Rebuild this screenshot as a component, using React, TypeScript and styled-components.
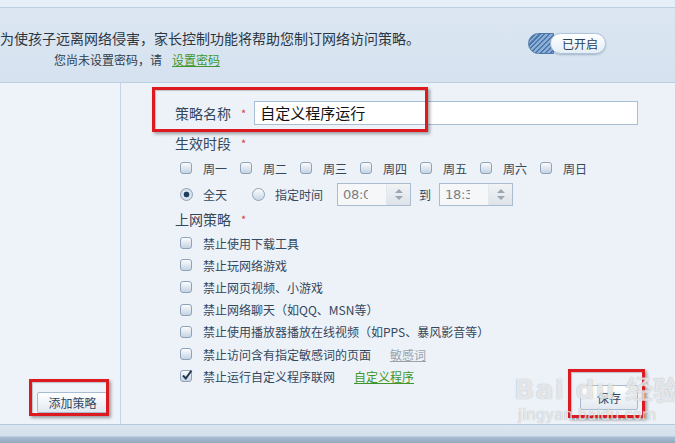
import React from "react";
import styled, { createGlobalStyle } from "styled-components";

const GlobalStyle = createGlobalStyle`
  html, body { margin: 0; padding: 0; background: #edf2f8; }
  body { font-family: "Noto Sans CJK SC", "Noto Sans", sans-serif; overflow: hidden; }
  * { box-sizing: border-box; }
`;

const Page = styled.div`
  position: relative;
  width: 675px;
  height: 443px;
  display: flex;
  flex-direction: column;
  background: #edf2f8;
  overflow: hidden;
`;

const TopStrip = styled.div`
  height: 8px;
  background: #e6eef7;
  border-bottom: 1px solid #bccee2;
`;

const Header = styled.div`
  height: 75px;
  display: flex;
  justify-content: space-between;
  align-items: flex-start;
  background: linear-gradient(#dbe6f2, #d6e2ef);
  border-bottom: 1px solid #bdcfe2;
`;

const Intro = styled.div`
  padding-top: 21px;
  display: flex;
  flex-direction: column;
`;

const IntroLine = styled.div`
  font-size: 14px;
  line-height: 18px;
  color: #2b3642;
  white-space: nowrap;
`;

const PasswordLine = styled.div`
  margin-top: 5px;
  padding-left: 54px;
  font-size: 12px;
  line-height: 16px;
  color: #333d48;
  display: flex;
  gap: 10px;
  white-space: nowrap;
`;

const Link = styled.span<{ $tone: "green" | "grey" }>`
  color: ${(p) => (p.$tone === "green" ? "#3e962c" : "#9aa3ad")};
  text-decoration: underline;
  font-size: 12px;
  cursor: pointer;
`;

const Toggle = styled.div`
  margin-top: 25px;
  margin-right: 69px;
  display: flex;
  align-items: center;
`;

const ToggleKnob = styled.div`
  width: 26px;
  height: 21px;
  border-radius: 11px 0 0 11px;
  border: 1px solid #4f78a8;
  background: repeating-linear-gradient(
    135deg,
    #4c7aaf 0px,
    #4c7aaf 1.5px,
    #8dafd6 1.5px,
    #8dafd6 3.5px
  );
`;

const TogglePill = styled.div`
  margin-left: -4px;
  width: 56px;
  height: 21px;
  border-radius: 11px;
  border: 1px solid #aec2d8;
  background: linear-gradient(#ffffff, #e5edf6);
  box-shadow: 0 1px 2px rgba(60, 90, 130, 0.35);
  font-size: 12px;
  line-height: 19px;
  color: #2c3e52;
  padding-left: 11px;
`;

const Main = styled.div`
  flex: 1;
  display: flex;
  min-height: 0;
`;

const Sidebar = styled.div`
  width: 121px;
  border-right: 1px solid #c6d5e5;
  display: flex;
  flex-direction: column;
  justify-content: flex-end;
  padding: 0 0 11px 37px;
  background: #edf3f9;
`;

const Button = styled.div<{ $w: number }>`
  width: ${(p) => p.$w}px;
  height: ${(p) => (p.$w > 60 ? 21 : 25)}px;
  border: 1px solid #a9bbce;
  border-radius: 2px;
  background: linear-gradient(#ffffff, #e2e9f1);
  display: flex;
  align-items: center;
  justify-content: center;
  font-size: 12px;
  color: #2f4763;
`;

const Content = styled.div`
  flex: 1;
  display: grid;
  padding-left: 54px;
  padding-right: 37px;
  padding-bottom: 14px;
`;

const Form = styled.div`
  grid-area: 1 / 1;
  display: flex;
  flex-direction: column;
  padding-top: 18px;
`;

const SaveSlot = styled.div`
  grid-area: 1 / 1;
  justify-self: end;
  align-self: end;
`;

const NameRow = styled.div`
  display: flex;
  align-items: center;
  height: 24px;
`;

const Label = styled.div<{ $gap: number }>`
  font-size: 14px;
  line-height: 18px;
  color: #33475d;
  margin-top: ${(p) => p.$gap}px;
  white-space: nowrap;
  display: flex;
  align-items: center;
`;

const Star = styled.span`
  color: #d83a3a;
  font-size: 11px;
  margin-left: 10px;
  margin-right: 8px;
`;

const NameInput = styled.div`
  flex: 1;
  height: 24px;
  background: #fff;
  border: 1px solid #a9bfd6;
  font-size: 15px;
  line-height: 22px;
  color: #111;
  padding-left: 5px;
`;

const Row = styled.div<{ $gap: number; $h: number }>`
  margin-top: ${(p) => p.$gap}px;
  height: ${(p) => p.$h}px;
  display: flex;
  align-items: center;
  padding-left: 5px;
  font-size: 12px;
  color: #33475d;
  white-space: nowrap;
`;

const DayGroup = styled.div`
  width: 60px;
  display: flex;
  align-items: center;
  gap: 11px;
`;

const Check = styled.div`
  position: relative;
  width: 12px;
  height: 12px;
  border: 1px solid #8ea3ba;
  border-radius: 3px;
  background: linear-gradient(#fbfcfe, #c5d3e3);
  flex-shrink: 0;
`;

const Radio = styled.div<{ $on?: boolean }>`
  width: 13px;
  height: 13px;
  border: 1px solid #8ea3ba;
  border-radius: 50%;
  background: ${(p) =>
    p.$on
      ? "radial-gradient(circle, #1f3d5e 0 2.6px, #dfe7f0 3.2px, #c8d5e4 100%)"
      : "linear-gradient(#fbfcfe, #cad6e4)"};
  flex-shrink: 0;
`;

const RadioLabel = styled.span<{ $gap: number }>`
  margin-left: 10px;
  margin-right: ${(p) => p.$gap}px;
`;

const Spinner = styled.div`
  width: 74px;
  height: 23px;
  border: 1px solid #a9bcd0;
  background: #f6f7f8;
  display: flex;
`;

const SpinText = styled.div`
  width: 30px;
  padding-left: 5px;
  overflow: hidden;
  font-size: 13px;
  line-height: 21px;
  color: #7a7f86;
  font-family: "DejaVu Sans", sans-serif;
  letter-spacing: -0.3px;
`;

const SpinArrows = styled.div`
  margin-left: auto;
  width: 24px;
  display: flex;
  flex-direction: column;
  align-items: center;
  justify-content: center;
  gap: 3px;
  background: linear-gradient(#f1f3f5, #dde3e9);
  border-left: 1px solid #e3e8ee;
`;

const Arrow = styled.div<{ $up?: boolean }>`
  width: 0;
  height: 0;
  border-left: 4px solid transparent;
  border-right: 4px solid transparent;
  ${(p) =>
    p.$up ? "border-bottom: 4px solid #9aa6b3;" : "border-top: 4px solid #9aa6b3;"}
`;

const To = styled.span`
  margin: 0 8px;
  font-size: 12px;
`;

const Rule = styled.div<{ $first?: boolean }>`
  margin-top: ${(p) => (p.$first ? 4 : 0)}px;
  height: 22.2px;
  display: flex;
  align-items: center;
  gap: 11px;
  padding-left: 5px;
  font-size: 12px;
  color: #33475d;
  white-space: nowrap;
`;

const RuleLink = styled.span`
  margin-left: 8px;
  display: inline-flex;
`;

const Footer = styled.div`
  height: 19px;
  border-top: 1px solid #b4c7db;
  background: linear-gradient(#dbe6f1 0, #d3dfec 11px, #a9bdd1 12px, #8ea5bc 19px);
`;

const Mark = styled.div<{ $l: number; $t: number; $w: number; $h: number }>`
  position: absolute;
  left: ${(p) => p.$l}px;
  top: ${(p) => p.$t}px;
  width: ${(p) => p.$w}px;
  height: ${(p) => p.$h}px;
  border: 3px solid #dc1a1f;
  box-shadow: 2px 2px 3px rgba(0, 0, 0, 0.35), inset 1px 1px 1px rgba(0, 0, 0, 0.2);
  pointer-events: none;
`;

const Watermark = styled.div`
  position: absolute;
  left: 514px;
  top: 374px;
  display: flex;
  flex-direction: column;
  align-items: flex-start;
  color: rgba(255, 255, 255, 0.72);
  text-shadow: 0 0 1px rgba(90, 100, 110, 0.55);
  pointer-events: none;
  font-family: "DejaVu Sans", sans-serif;
`;

const WmTop = styled.div`
  font-size: 27px;
  font-weight: bold;
  line-height: 32px;
  letter-spacing: 1px;
  white-space: nowrap;
`;

const WmBottom = styled.div`
  font-size: 15px;
  line-height: 18px;
  margin-left: 4px;
  white-space: nowrap;
`;

const CheckMark = () => (
  <svg
    width="12"
    height="12"
    viewBox="0 0 12 12"
    style={{ position: "absolute", left: 0, top: -2 }}
  >
    <path d="M2 6.5 L4.8 9.5 L10.5 1.5" fill="none" stroke="#1d3550" strokeWidth="2" />
  </svg>
);

const days = ["周一", "周二", "周三", "周四", "周五", "周六", "周日"];

const rules: { text: string; link?: { label: string; tone: "green" | "grey" }; on?: boolean }[] = [
  { text: "禁止使用下载工具" },
  { text: "禁止玩网络游戏" },
  { text: "禁止网页视频、小游戏" },
  { text: "禁止网络聊天（如QQ、MSN等）" },
  { text: "禁止使用播放器播放在线视频（如PPS、暴风影音等）" },
  { text: "禁止访问含有指定敏感词的页面", link: { label: "敏感词", tone: "grey" } },
  { text: "禁止运行自定义程序联网", link: { label: "自定义程序", tone: "green" }, on: true },
];

const TimeSpinner = ({ value }: { value: string }) => (
  <Spinner>
    <SpinText>{value}</SpinText>
    <SpinArrows>
      <Arrow $up />
      <Arrow />
    </SpinArrows>
  </Spinner>
);

export default function App() {
  return (
    <Page>
      <GlobalStyle />
      <TopStrip />
      <Header>
        <Intro>
          <IntroLine>为使孩子远离网络侵害，家长控制功能将帮助您制订网络访问策略。</IntroLine>
          <PasswordLine>
            <span>您尚未设置密码，请</span>
            <Link $tone="green">设置密码</Link>
          </PasswordLine>
        </Intro>
        <Toggle>
          <ToggleKnob />
          <TogglePill>已开启</TogglePill>
        </Toggle>
      </Header>
      <Main>
        <Sidebar>
          <Button $w={71}>添加策略</Button>
        </Sidebar>
        <Content>
          <Form>
            <NameRow>
              <Label $gap={0}>
                策略名称<Star>*</Star>
              </Label>
              <NameInput>自定义程序运行</NameInput>
            </NameRow>
            <Label $gap={9}>
              生效时段<Star>*</Star>
            </Label>
            <Row $gap={7} $h={18}>
              {days.map((d) => (
                <DayGroup key={d}>
                  <Check />
                  <span>{d}</span>
                </DayGroup>
              ))}
            </Row>
            <Row $gap={6} $h={23}>
              <Radio $on />
              <RadioLabel $gap={25}>全天</RadioLabel>
              <Radio />
              <RadioLabel $gap={14}>指定时间</RadioLabel>
              <TimeSpinner value="08:00" />
              <To>到</To>
              <TimeSpinner value="18:30" />
            </Row>
            <Label $gap={4}>
              上网策略<Star>*</Star>
            </Label>
            {rules.map((r, i) => (
              <Rule key={r.text} $first={i === 0}>
                <Check>{r.on && <CheckMark />}</Check>
                <span>{r.text}</span>
                {r.link && (
                  <RuleLink>
                    <Link $tone={r.link.tone}>{r.link.label}</Link>
                  </RuleLink>
                )}
              </Rule>
            ))}
          </Form>
          <SaveSlot>
            <Button $w={58}>保存</Button>
          </SaveSlot>
        </Content>
      </Main>
      <Footer />
      <Mark $l={152} $t={87} $w={276} $h={45} />
      <Mark $l={29} $t={379} $w={80} $h={37} />
      <Mark $l={568} $t={369} $w={77} $h={49} />
      <Watermark>
        <WmTop>Bai du 经验</WmTop>
        <WmBottom>jingyan.baidu.com</WmBottom>
      </Watermark>
    </Page>
  );
}
